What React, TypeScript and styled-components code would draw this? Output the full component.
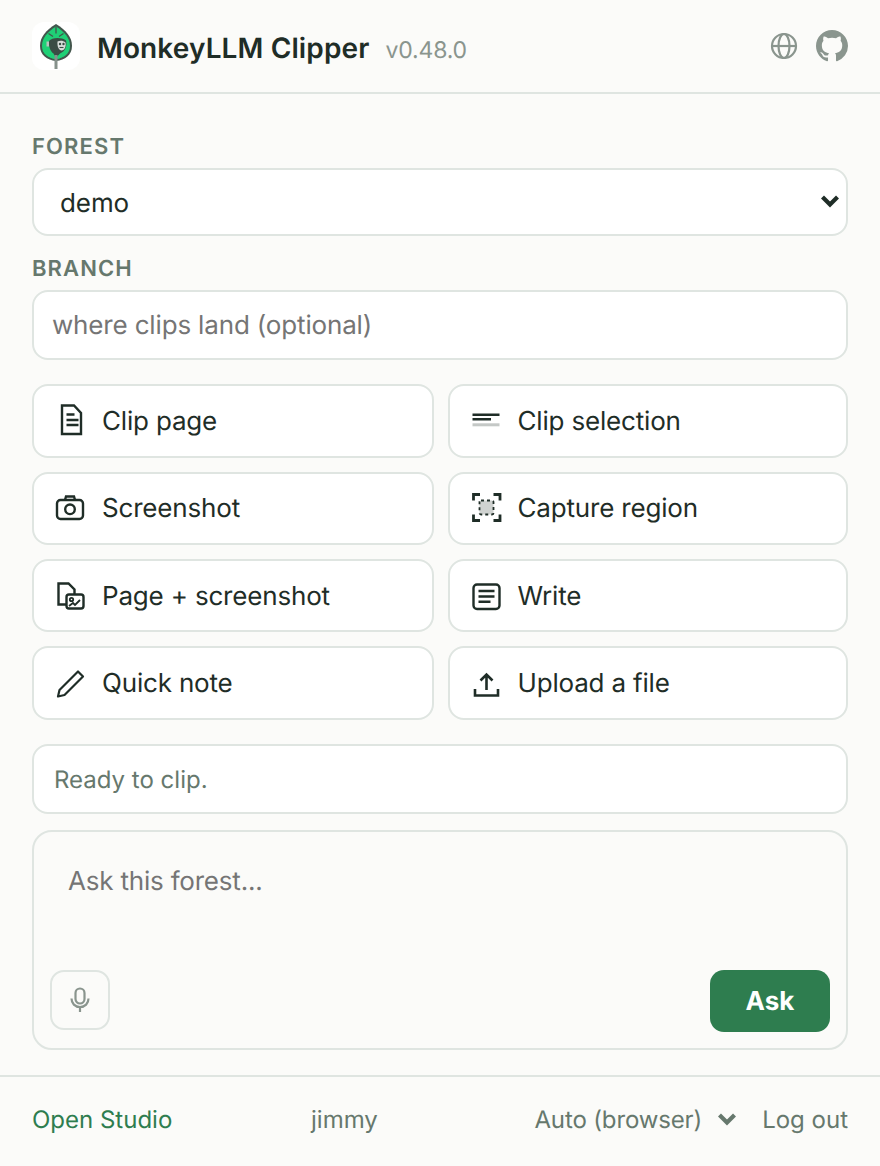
import React from "react";
import styled, { createGlobalStyle } from "styled-components";

const Global = createGlobalStyle`
  html, body { margin: 0; padding: 0; background: #fbfbf9; }
  body { font-family: Inter, "Liberation Sans", sans-serif; color: #1f2d27; text-rendering: geometricPrecision; }
  input, select, textarea, button { text-rendering: geometricPrecision; }
  * { box-sizing: border-box; }
`;
const Page = styled.div`width: 880px; height: 1166px; background: #fbfbf9; display: flex; flex-direction: column;`;
const Header = styled.header`
  height: 94px; flex: none; border-bottom: 2px solid #dfe5e1; padding: 0 32px;
  display: flex; align-items: center; justify-content: space-between;
`;
const Brand = styled.div`display: flex; align-items: center;`;
const LogoTile = styled.div`
  width: 48px; height: 48px; border-radius: 12px; background: #fff; flex: none; margin-right: 17px; display: flex;
`;
const TitleRow = styled.div`display: flex; align-items: baseline; gap: 16px; margin-top: 4px;`;
const Title = styled.h1`margin: 0; font-size: 28px; font-weight: 600; line-height: 34px; letter-spacing: 0.12px; color: #1f2d27;`;
const Version = styled.span`font-size: 23px; letter-spacing: -0.15px; color: #8a958e;`;
const HeaderIcons = styled.div`display: flex; align-items: center; gap: 18px; color: #8a958e;`;
const Main = styled.main`flex: 1; padding: 40px 32px 0; display: flex; flex-direction: column;`;
const Label = styled.label`
  display: block; font-size: 22px; font-weight: 600; letter-spacing: 1.12px; line-height: 26px; color: #66786d; margin-bottom: 8px;
`;
const SelectWrap = styled.div`position: relative; margin-bottom: 20px;`;
const Select = styled.select`
  width: 100%; height: 68px; appearance: none; background: #fff; border: 2px solid #dfe5e1; border-radius: 16px;
  padding: 2px 26px 0; font: 400 26px Inter, sans-serif; letter-spacing: -0.1px; color: #1f2d27; display: block;
`;
const SelectChevron = styled.span`position: absolute; right: 8px; top: 26px; pointer-events: none; display: flex;`;
const Input = styled.input`
  display: block; width: 100%; height: 70px; background: #fff; border: 2px solid #dfe5e1; border-radius: 16px;
  padding: 0 18px; font: 400 26px Inter, sans-serif; letter-spacing: -0.16px; color: #1f2d27;
  &::placeholder { color: #757575; opacity: 1; }
`;
const Actions = styled.div`display: grid; grid-template-columns: 401.5px 400.5px; gap: 14px; margin-top: 24.2px;`;
const Action = styled.button`
  height: 73.33px; background: #fff; border: 2px solid #dfe5e1; border-radius: 16px; padding: 0 20px;
  display: flex; align-items: center; gap: 14px; font: 400 26px Inter, sans-serif; letter-spacing: -0.18px; color: #1f2d27; text-align: left;
`;
const ActionLabel = styled.span`padding-top: 1.5px;`;
const IconBox = styled.span`width: 34px; height: 34px; flex: none; display: flex; color: #1f2d27;`;
const Status = styled.div`
  height: 70px; margin-top: 24px; background: #fff; border: 2px solid #dfe5e1; border-radius: 16px; padding: 1px 20px 0;
  display: flex; align-items: center; font-size: 24px; color: #66786d;
`;
const AskBox = styled.div`
  height: 220px; margin-top: 16px; background: transparent; border: 2px solid #dfe5e1; border-radius: 20px;
  padding: 16px; display: flex; flex-direction: column; justify-content: space-between;
`;
const AskField = styled.textarea`
  border: 0; outline: 0; resize: none; background: transparent; width: 100%; height: 100px; padding: 18px 18px;
  font: 400 26px/32px Inter, sans-serif; letter-spacing: -0.2px; color: #1f2d27;
  &::placeholder { color: #757575; opacity: 1; }
`;
const AskRow = styled.div`display: flex; justify-content: space-between; align-items: flex-start; height: 62px;`;
const MicButton = styled.button`
  width: 60px; height: 60px; border: 2px solid #dfe5e1; border-radius: 14px; background: transparent; color: #8a958e; padding: 0;
  display: flex; align-items: center; justify-content: center;
`;
const AskButton = styled.button`
  width: 120px; height: 62px; border: 0; border-radius: 14px; background: #2e7d4f; color: #fff; padding: 2px 0 0; font: 700 26px Inter, sans-serif;
`;
const Footer = styled.footer`
  height: 91px; flex: none; border-top: 2px solid #dfe5e1; padding: 0 32px 5px;
  display: flex; align-items: center; font-size: 24px; color: #66786d;
`;
const StudioLink = styled.a`color: #2e7d4f; text-decoration: none; width: 279px;`;
const FooterRight = styled.div`display: flex; align-items: center; margin-left: auto;`;
const Model = styled.span`display: flex; align-items: center; gap: 15px; margin-right: 25px; letter-spacing: -0.14px;`;

const Leaf = () => (
  <svg width="48" height="48" viewBox="0 0 48 48">
    <path d="M24 2C14 8 8 15 8 24C8 33 15 38 24 39C33 38 40 33 40 24C40 15 34 8 24 2Z" fill="#43564d" />
    <path d="M24 4.500C15.500 10 10 16 10 24C10 31.500 16 36 24 37C32 36 38 31.500 38 24C38 16 32.500 10 24 4.500Z" fill="#1fd076" />
    <path d="M24 5V11.500M16.500 11.500L21 14.500M31.500 11.500L27 14.500" stroke="#43564d" strokeWidth="1.300" fill="none" />
    <path d="M17 19C20 15.500 29 15 34 18.500C35.500 24 33 29.500 28 31.500L24 36L21.500 31.500C18.500 29.500 16.500 25 17 19Z" fill="#3a4c44" />
    <path d="M14.500 19.500h2.500v5h-2.500z" fill="#b9c2bd" />
    <path d="M25.500 19.500C28 18 31.500 18.500 33.500 20.500C34.500 25 32 28.500 29.500 28.500C27 28.500 25 25 25.500 19.500Z" fill="#d7dcd9" />
    <circle cx="28" cy="22" r="1.200" fill="#3a4c44" /><circle cx="31.500" cy="22" r="1.200" fill="#3a4c44" />
    <path d="M27.500 25.500h4" stroke="#3a4c44" strokeWidth="1.100" />
    <path d="M10.500 28C13 33 18 36 22.500 37L22.500 34.500C18 33 14 31 10.500 28ZM37.500 27C35 32 30 36 25.500 37L25.500 34C30 32 34 30 37.500 27Z" fill="#1fd076" />
    <rect x="22.500" y="33" width="3" height="14" fill="#86918b" />
  </svg>
);
const Globe = () => (
  <svg width="28" height="28" viewBox="0 0 28 28" fill="none" stroke="currentColor" strokeWidth="2.200">
    <circle cx="14" cy="14" r="12" /><ellipse cx="14" cy="14" rx="5.500" ry="12" /><path d="M2 14h24" />
  </svg>
);
const Github = () => (
  <svg width="32" height="32" viewBox="0 0 16 16" fill="currentColor">
    <path d="M8 0C3.58 0 0 3.58 0 8c0 3.54 2.29 6.53 5.47 7.59.4.07.55-.17.55-.38 0-.19-.01-.82-.01-1.49-2.01.37-2.53-.49-2.69-.94-.09-.23-.48-.94-.82-1.13-.28-.15-.68-.52-.01-.53.63-.01 1.08.58 1.23.82.72 1.21 1.87.87 2.33.66.07-.52.28-.87.51-1.07-1.78-.2-3.64-.89-3.64-3.95 0-.87.31-1.59.82-2.15-.08-.2-.36-1.02.08-2.12 0 0 .67-.21 2.2.82.64-.18 1.32-.27 2-.27.68 0 1.36.09 2 .27 1.53-1.04 2.2-.82 2.2-.82.44 1.1.16 1.92.08 2.12.51.56.82 1.27.82 2.15 0 3.07-1.87 3.75-3.65 3.95.29.25.54.73.54 1.48 0 1.07-.01 1.93-.01 2.2 0 .21.15.46.55.38A8.013 8.013 0 0016 8c0-4.42-3.58-8-8-8z" />
  </svg>
);
const Chevron = ({ color }: { color: string }) => (
  <svg width="20" height="14" viewBox="0 0 20 14" fill="none" stroke={color} strokeWidth="4.200">
    <path d="M2.500 3l7.500 7.500L17.500 3" />
  </svg>
);
const s = { fill: "none", stroke: "currentColor", strokeWidth: 2.4 } as const;
const PageIcon = () => (
  <svg width="34" height="34" viewBox="0 0 34 34" {...s}>
    <path d="M8 1.500h12l7 7.500V30H8z" /><path d="M12.500 10.500h8M12.500 16h12M12.500 21h12" />
  </svg>
);
const SelectionIcon = () => (
  <svg width="34" height="34" viewBox="0 0 34 34" fill="none">
    <path d="M2.500 10.800h27M2.500 15.200h18.500" stroke="#1f2d27" strokeWidth="2.600" />
    <path d="M2.500 20.800h27" stroke="#c4c8c6" strokeWidth="3" />
  </svg>
);
const CameraIcon = () => (
  <svg width="34" height="34" viewBox="0 0 34 34" {...s}>
    <rect x="3" y="9" width="26" height="19" rx="3.500" /><path d="M11 9l1-3.500h8l1 3.500" /><circle cx="16" cy="18.300" r="4.800" />
  </svg>
);
const RegionIcon = () => (
  <svg width="34" height="34" viewBox="0 0 34 34" fill="none" stroke="#1f2d27" strokeWidth="2.800">
    <path d="M3.500 9.500V3.500H10M23.500 3.500H30V9.500M3.500 23.500V29.500H10M30 23.500V29.500H23.500" />
    <rect x="9.500" y="9.500" width="14" height="14" rx="1.500" fill="#cfd2d0" strokeWidth="1.800" strokeDasharray="3 3" />
  </svg>
);
const ComboIcon = () => (
  <svg width="34" height="34" viewBox="0 0 34 34" {...s}>
    <path d="M12 25.500H4.500V4.500h10l6 6v4.500" />
    <rect x="12.500" y="15.500" width="17" height="14" rx="2.500" /><circle cx="17.500" cy="20.500" r="1.700" strokeWidth="1.800" /><path d="M15 27l4-3 2 2 5-5" strokeWidth="1.800" />
  </svg>
);
const WriteIcon = () => (
  <svg width="34" height="34" viewBox="0 0 34 34" {...s}>
    <rect x="3.500" y="5.500" width="26" height="24.500" rx="3.500" /><path d="M8.500 12h16M8.500 17.500h16M8.500 22.700h12" />
  </svg>
);
const PencilIcon = () => (
  <svg width="34" height="34" viewBox="0 0 34 34" {...s} strokeWidth="2.200">
    <path d="M4 30.500l1.500-6.500L24 5.500l5 5L10.500 29z" strokeLinejoin="round" />
  </svg>
);
const UploadIcon = () => (
  <svg width="34" height="34" viewBox="0 0 34 34" {...s} strokeWidth="2.600">
    <path d="M16.500 24V9M10.500 14.500l6-6 6 6M5 23v6.500h23V23" />
  </svg>
);
const Mic = () => (
  <svg width="22" height="26" viewBox="0 0 22 26" fill="none" stroke="currentColor" strokeWidth="2.200">
    <rect x="6.500" y="1.500" width="9" height="15" rx="4.500" /><path d="M2.500 11.500c0 5 3.500 8.500 8.500 8.500s8.500-3.500 8.500-8.500M11 20v5" />
  </svg>
);

const actions: [string, React.ReactNode][] = [
  ["Clip page", <PageIcon />], ["Clip selection", <SelectionIcon />],
  ["Screenshot", <CameraIcon />], ["Capture region", <RegionIcon />],
  ["Page + screenshot", <ComboIcon />], ["Write", <WriteIcon />],
  ["Quick note", <PencilIcon />], ["Upload a file", <UploadIcon />],
];

export default function App() {
  return (
    <Page>
      <Global />
      <Header>
        <Brand>
          <LogoTile><Leaf /></LogoTile>
          <TitleRow>
            <Title>MonkeyLLM Clipper</Title>
            <Version>v0.48.0</Version>
          </TitleRow>
        </Brand>
        <HeaderIcons><Globe /><Github /></HeaderIcons>
      </Header>
      <Main>
        <Label>FOREST</Label>
        <SelectWrap>
          <Select defaultValue="demo"><option>demo</option></Select>
          <SelectChevron><Chevron color="#1f2d27" /></SelectChevron>
        </SelectWrap>
        <Label>BRANCH</Label>
        <Input placeholder="where clips land (optional)" />
        <Actions>
          {actions.map(([t, i]) => (
            <Action key={t}><IconBox>{i}</IconBox><ActionLabel>{t}</ActionLabel></Action>
          ))}
        </Actions>
        <Status>Ready to clip.</Status>
        <AskBox>
          <AskField placeholder="Ask this forest..." />
          <AskRow>
            <MicButton aria-label="Voice"><Mic /></MicButton>
            <AskButton>Ask</AskButton>
          </AskRow>
        </AskBox>
      </Main>
      <Footer>
        <StudioLink href="#">Open Studio</StudioLink>
        <span>jimmy</span>
        <FooterRight>
          <Model>Auto (browser) <Chevron color="#66786d" /></Model>
          <span>Log out</span>
        </FooterRight>
      </Footer>
    </Page>
  );
}
